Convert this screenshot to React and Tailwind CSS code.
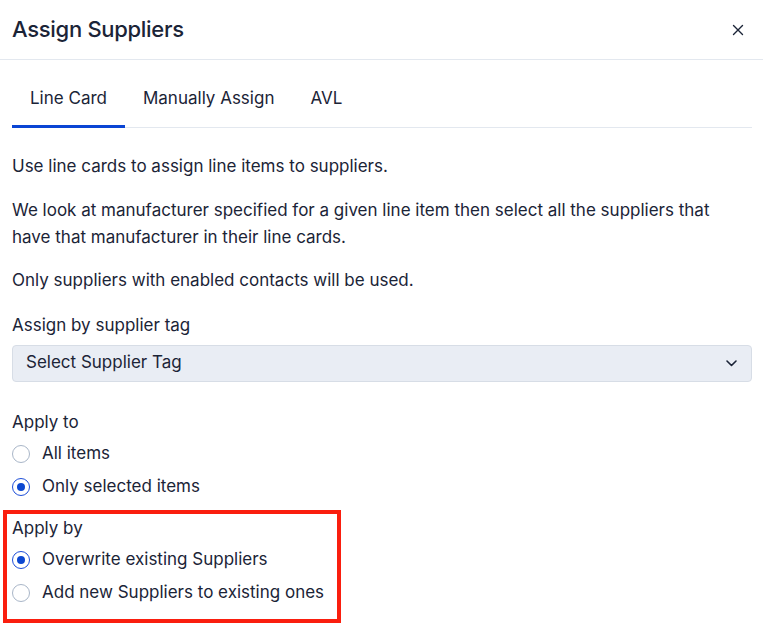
import React from "react";

function Radio({ checked, label }) {
  return (
    <div className="flex items-center h-[33px]">
      <span
        className={
          "w-[18px] h-[18px] rounded-full border flex items-center justify-center bg-white " +
          (checked ? "border-[#1d4ed8]" : "border-[#a9b6c8]")
        }
      >
        {checked && <span className="w-[8px] h-[8px] rounded-full bg-[#0b47d1]" />}
      </span>
      <span className="ml-[12px]">{label}</span>
    </div>
  );
}

export default function App() {
  return (
    <div
      className="w-[763px] h-[631px] bg-white text-[#1b2437] overflow-hidden"
      style={{ fontFamily: "Inter, 'Noto Sans', sans-serif" }}
    >
      <div className="h-[60px] border-b border-[#e3e8ef] flex items-center justify-between pl-[12px] pr-[19px]">
        <div className="text-[22px] font-medium tracking-[-0.3px]">Assign Suppliers</div>
        <svg width="12" height="12" viewBox="0 0 12 12" className="text-[#1b2437]">
          <path d="M1.5 1.5 L10.5 10.5 M10.5 1.5 L1.5 10.5" stroke="currentColor" strokeWidth="1.4" strokeLinecap="round" />
        </svg>
      </div>

      <div className="pl-[12px] pr-[11px] text-[17px]">
        <div className="mt-[12px] flex border-b border-[#e3e8ef]">
          <div className="px-[18px] pt-[14px] pb-[13px] border-b-[3px] border-[#0a45d4] -mb-px">Line Card</div>
          <div className="px-[18px] pt-[14px] pb-[13px]">Manually Assign</div>
          <div className="px-[18px] pt-[14px] pb-[13px]">AVL</div>
        </div>

        <div className="leading-[27px]">
          <p className="mt-[25px]">Use line cards to assign line items to suppliers.</p>
          <p className="mt-[17px]">
            We look at manufacturer specified for a given line item then select all the suppliers that have that manufacturer in their line cards.
          </p>
          <p className="mt-[16px]">Only suppliers with enabled contacts will be used.</p>
          <p className="mt-[18px]">Assign by supplier tag</p>
        </div>

        <div className="mt-[6px] h-[37px] rounded-[4px] border border-[#d7dde6] bg-[#e9edf4] flex items-center justify-between pl-[13px] pr-[14px]">
          <span>Select Supplier Tag</span>
          <svg width="11" height="7" viewBox="0 0 11 7">
            <path d="M1 1 L5.5 5.5 L10 1" fill="none" stroke="#1b2437" strokeWidth="1.6" strokeLinecap="round" strokeLinejoin="round" />
          </svg>
        </div>

        <div className="mt-[27px] leading-[27px]">Apply to</div>
        <div className="mt-[2px]">
          <Radio label="All items" />
          <Radio checked label="Only selected items" />
        </div>
      </div>

      <div className="ml-[3px] mt-[6px] w-[338px] h-[113px] border-[4px] border-[#fa1e0e] pl-[5px] text-[17px]">
        <div className="mt-[1px] leading-[27px]">Apply by</div>
        <div className="mt-[2px]">
          <Radio checked label="Overwrite existing Suppliers" />
          <Radio label="Add new Suppliers to existing ones" />
        </div>
      </div>
    </div>
  );
}
